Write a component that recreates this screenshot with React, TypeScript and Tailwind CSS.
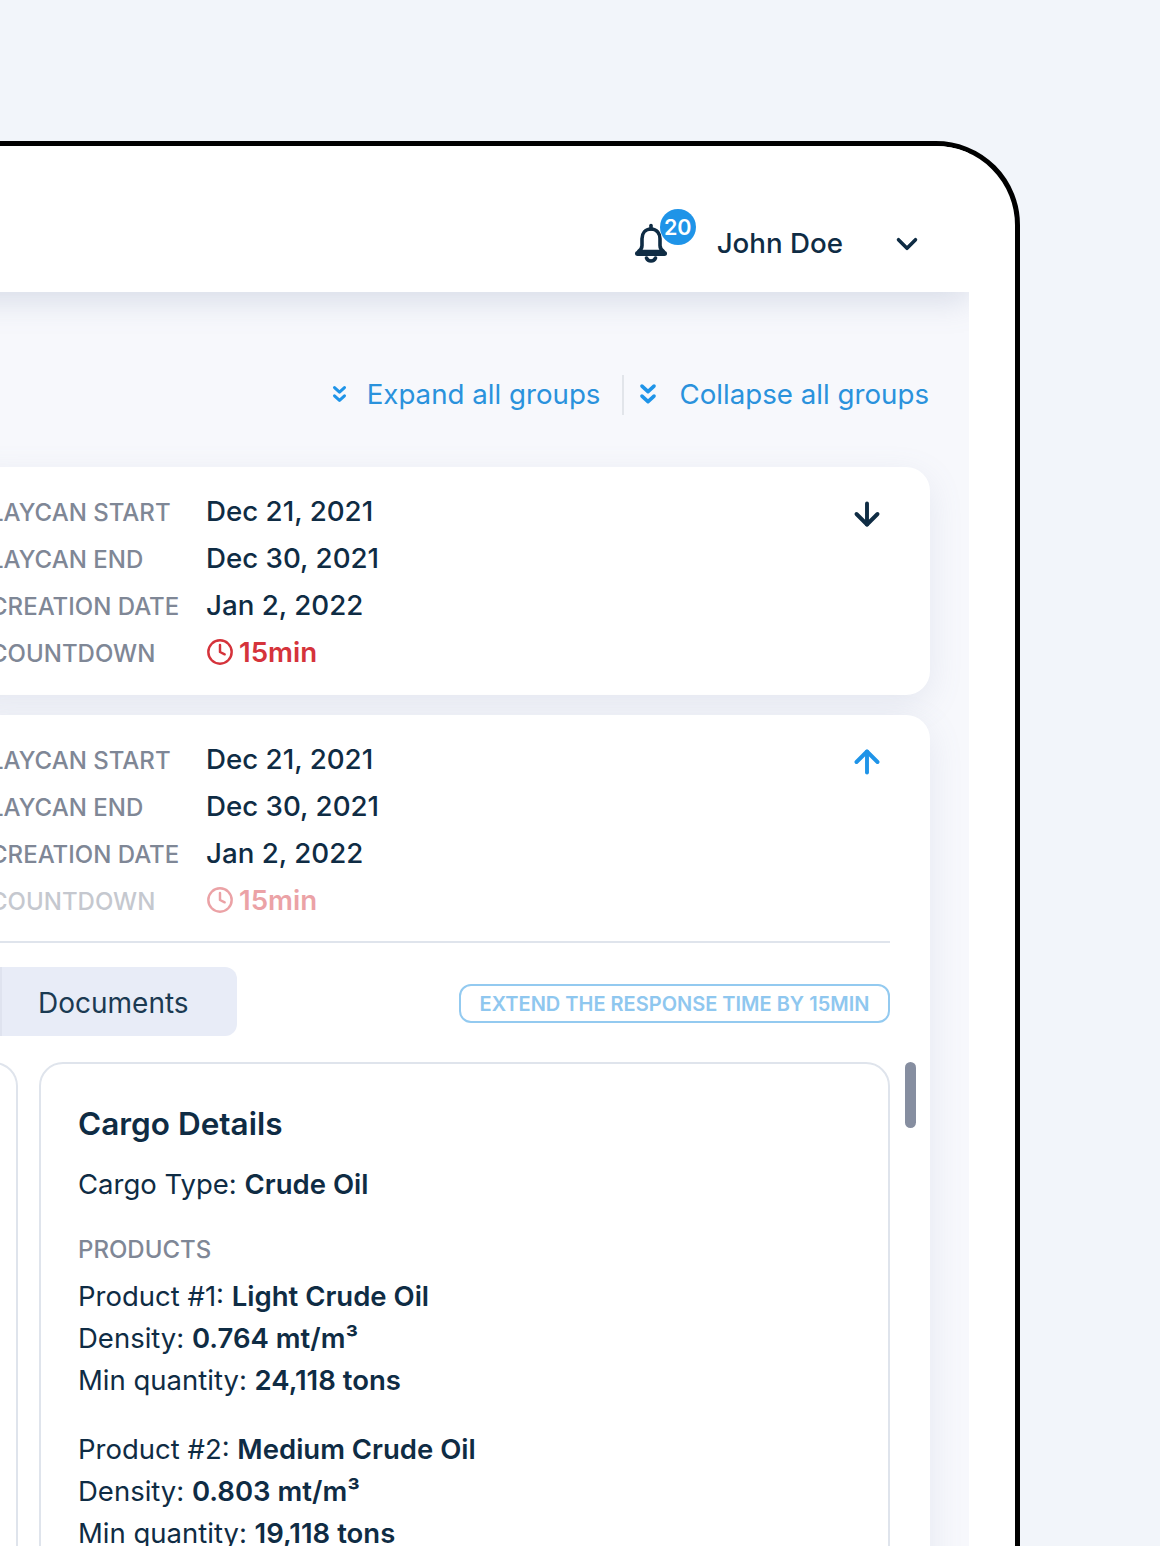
import { ArrowDown, ArrowUp, ChevronDown, Clock } from "lucide-react";

const rows = [
  { label: "LAYCAN START", value: "Dec 21, 2021" },
  { label: "LAYCAN END", value: "Dec 30, 2021" },
  { label: "CREATION DATE", value: "Jan 2, 2022" },
];

function Summary({ faded }: { faded?: boolean }) {
  return (
    <div className="grid grid-cols-[216px_1fr] auto-rows-[47px] items-center">
      {rows.map((row) => (
        <div key={row.label} className="contents">
          <span className="mt-[3px] text-[24px] font-[550] text-[#7f8796]">{row.label}</span>
          <span className="text-[27.700px] font-[550] text-[#0f2c44]">{row.value}</span>
        </div>
      ))}
      <span className={`mt-[3px] text-[24px] font-[550] text-[#7f8796] ${faded ? "opacity-45" : ""}`}>COUNTDOWN</span>
      <span className={`flex items-center gap-[5px] text-[27.700px] font-semibold text-[#d5333b] ${faded ? "opacity-45" : ""}`}>
        <Clock size={28} strokeWidth={2.1} />
        15min
      </span>
    </div>
  );
}

function Bell() {
  return (
    <svg width="34" height="40" viewBox="0 0 34 40" fill="none" stroke="#0f2c44" strokeWidth="3.6" strokeLinecap="round" strokeLinejoin="round">
      <path d="M17 6c-5.800 0-9 4.400-9 9.800v6.700c0 2.400-1.200 4.300-3.500 6h25c-2.300-1.700-3.500-3.600-3.500-6v-6.700c0-5.400-3.200-9.800-9-9.800z" />
      <path d="M17 2.500v3.500" />
      <path d="M3.500 30.500h27" strokeWidth="5" />
      <path d="M12.500 35c.8 2 2.400 3 4.500 3s3.700-1 4.500-3" />
    </svg>
  );
}

function DoubleChevron({ size }: { size: number }) {
  return (
    <svg width={size} height={size * 1.23} viewBox="0 0 18 22" fill="none" stroke="#1f94e8" strokeWidth="3.6" strokeLinecap="round" strokeLinejoin="round">
      <path d="M3 3l6 5.500 6-5.500" />
      <path d="M3 13l6 5.500 6-5.500" />
    </svg>
  );
}

export default function App() {
  return (
    <div className="h-[1546px] w-[1160px] overflow-hidden bg-[#f2f5fa] font-['Inter',sans-serif]">
      <div className="ml-[-80px] mt-[141px] flex h-[1500px] w-[1100px] overflow-hidden rounded-tr-[84px] border-[5px] border-black bg-white pr-[46px]">
        <div className="flex flex-1 flex-col overflow-hidden">
          <header className="relative z-10 flex h-[146px] shrink-0 items-center justify-end bg-white pr-[45.500px] pt-[50px] shadow-[0_8px_30px_rgba(120,135,170,0.25)]">
            <div className="relative mr-[49px] mt-[-2px]">
              <Bell />
              <span className="absolute left-[26px] top-[-14px] flex h-[36px] w-[36px] items-center justify-center rounded-full bg-[#1f94e8] text-[21.500px] font-semibold text-white">
                20
              </span>
            </div>
            <span className="text-[27.700px] font-[550] text-[#0f2c44]">John Doe</span>
            <ChevronDown className="ml-[46.500px] mt-[-1px] text-[#0f2c44]" size={34} strokeWidth={2.5} />
          </header>

          <main className="flex-1 overflow-hidden bg-[#f7f8fc] px-[39px]">
            <div className="flex h-[175px] items-center justify-end pr-[1px] pt-[30px] text-[27.700px] text-[#2a92dc]">
              <DoubleChevron size={15} />
              <span className="ml-[20px]">Expand all groups</span>
              <span className="ml-[22px] mr-[15px] h-[40px] w-[2px] bg-[#e2e5ea]" />
              <DoubleChevron size={18} />
              <span className="ml-[22px]">Collapse all groups</span>
            </div>

            <section className="relative flex h-[228px] rounded-[24px] bg-white pl-[26px] pr-[40px] pt-[21px] shadow-[0_10px_34px_rgba(120,135,170,0.14)]">
              <div className="flex-1">
                <Summary />
              </div>
              <ArrowDown className="mr-[5px] mt-[8px] text-[#0f2c44]" size={36} strokeWidth={2.6} />
            </section>

            <section className="relative mt-[20px] h-[900px] rounded-[24px] bg-white pl-[26px] pr-[40px] pt-[21px] shadow-[0_10px_34px_rgba(120,135,170,0.14)]">
              <div className="flex">
                <div className="flex-1">
                  <Summary faded />
                </div>
                <ArrowUp className="mr-[5px] mt-[8px] text-[#1f94e8]" size={36} strokeWidth={2.6} />
              </div>
              <div className="mt-[17px] h-[2px] bg-[#dfe4ec]" />

              <div className="mt-[24px] flex items-center justify-between">
                <div className="flex h-[69px]">
                  <div className="w-[12px] bg-[#dfe3ef]" />
                  <div className="flex w-[235px] items-center rounded-r-[12px] bg-[#e8ecf7] pl-[36px] pt-[3px] text-[28px] text-[#1b3a52]">
                    Documents
                  </div>
                </div>
                <button className="mt-[3px] flex h-[39px] w-[431px] items-center justify-center rounded-[12px] border-2 border-[#93caf0] pt-[1px] text-[20px] font-semibold text-[#8fc7ef]">
                  EXTEND THE RESPONSE TIME BY 15MIN
                </button>
              </div>

              <div className="relative mt-[26px] flex gap-[21px]">
                <div className="h-[700px] w-[28px] rounded-r-[24px] border-2 border-l-0 border-[#dfe4ec]" />
                <div className="h-[700px] flex-1 rounded-[24px] border-2 border-[#dfe4ec] px-[37px] pt-[40px] text-[27.500px] leading-[42px] text-[#0f2c44]">
                  <h3 className="text-[31.500px] font-semibold leading-[40px]">Cargo Details</h3>
                  <p className="mt-[19px]">
                    Cargo Type: <b className="font-semibold">Crude Oil</b>
                  </p>
                  <p className="mt-[27px] text-[24px] font-[550] leading-[36px] text-[#7f8796]">PRODUCTS</p>
                  <p className="mt-[7px]">
                    Product #1: <b className="font-semibold">Light Crude Oil</b>
                  </p>
                  <p>
                    Density: <b className="font-semibold">0.764 mt/m³</b>
                  </p>
                  <p>
                    Min quantity: <b className="font-semibold">24,118 tons</b>
                  </p>
                  <p className="mt-[27px]">
                    Product #2: <b className="font-semibold">Medium Crude Oil</b>
                  </p>
                  <p>
                    Density: <b className="font-semibold">0.803 mt/m³</b>
                  </p>
                  <p>
                    Min quantity: <b className="font-semibold">19,118 tons</b>
                  </p>
                </div>
                <div className="absolute right-[-26px] top-0 h-[66px] w-[11px] rounded-full bg-[#868ea0]" />
              </div>
            </section>
          </main>
        </div>
      </div>
    </div>
  );
}
